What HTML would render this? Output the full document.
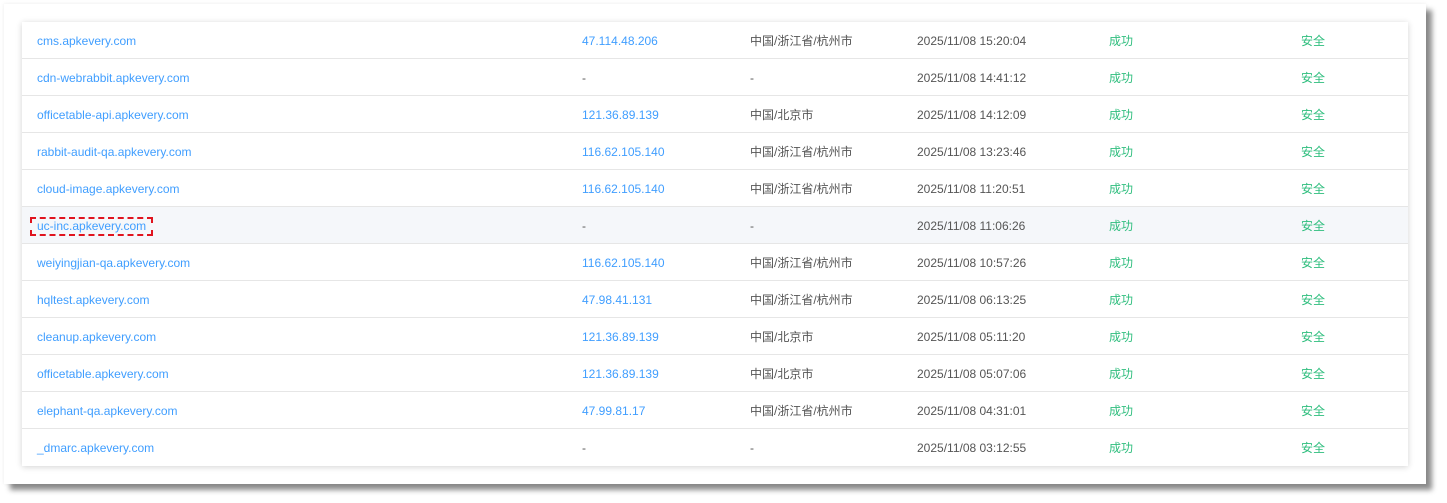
<!DOCTYPE html>
<html><head><meta charset="utf-8"><style>
body{margin:0;width:1447px;height:503px;background:#fff;position:relative;overflow:hidden;font-family:"Liberation Sans","Noto Sans CJK SC",sans-serif;font-size:12px}
.outer{position:absolute;left:4px;top:4px;width:1422px;height:480px;background:#fff;box-shadow:6px 6px 5px rgba(0,0,0,.45),0 0 4px rgba(0,0,0,.08)}
.tbl{position:absolute;left:22px;top:22px;width:1386px;height:444px;background:#fff;box-shadow:0 1px 6px rgba(0,0,0,.18)}
.r{position:relative;height:36px;border-bottom:1px solid #e6e6e6;line-height:36px}
.r:last-child{border-bottom:none}
.r.h{background:#f5f7fa}
.r span{position:absolute;top:1px;white-space:nowrap}
.a{left:15px;color:#409eff}.b{left:560px}.c{left:728px;color:#555}.d{left:895px;color:#555}.e{left:1087px;color:#2fbe7e}.f{left:1279px;color:#2fbe7e}
.ip{color:#409eff}.dash{color:#555}
.box{position:absolute;left:8px;top:10px;width:119px;height:15px;border:2px dashed #e0141e}
</style></head><body>
<div class="outer"></div>
<div class="tbl">
<div class="r"><span class="a">cms.apkevery.com</span><span class="b ip">47.114.48.206</span><span class="c">中国/浙江省/杭州市</span><span class="d">2025/11/08 15:20:04</span><span class="e">成功</span><span class="f">安全</span></div>
<div class="r"><span class="a">cdn-webrabbit.apkevery.com</span><span class="b dash">-</span><span class="c">-</span><span class="d">2025/11/08 14:41:12</span><span class="e">成功</span><span class="f">安全</span></div>
<div class="r"><span class="a">officetable-api.apkevery.com</span><span class="b ip">121.36.89.139</span><span class="c">中国/北京市</span><span class="d">2025/11/08 14:12:09</span><span class="e">成功</span><span class="f">安全</span></div>
<div class="r"><span class="a">rabbit-audit-qa.apkevery.com</span><span class="b ip">116.62.105.140</span><span class="c">中国/浙江省/杭州市</span><span class="d">2025/11/08 13:23:46</span><span class="e">成功</span><span class="f">安全</span></div>
<div class="r"><span class="a">cloud-image.apkevery.com</span><span class="b ip">116.62.105.140</span><span class="c">中国/浙江省/杭州市</span><span class="d">2025/11/08 11:20:51</span><span class="e">成功</span><span class="f">安全</span></div>
<div class="r h"><div class="box"></div><span class="a">uc-inc.apkevery.com</span><span class="b dash">-</span><span class="c">-</span><span class="d">2025/11/08 11:06:26</span><span class="e">成功</span><span class="f">安全</span></div>
<div class="r"><span class="a">weiyingjian-qa.apkevery.com</span><span class="b ip">116.62.105.140</span><span class="c">中国/浙江省/杭州市</span><span class="d">2025/11/08 10:57:26</span><span class="e">成功</span><span class="f">安全</span></div>
<div class="r"><span class="a">hqltest.apkevery.com</span><span class="b ip">47.98.41.131</span><span class="c">中国/浙江省/杭州市</span><span class="d">2025/11/08 06:13:25</span><span class="e">成功</span><span class="f">安全</span></div>
<div class="r"><span class="a">cleanup.apkevery.com</span><span class="b ip">121.36.89.139</span><span class="c">中国/北京市</span><span class="d">2025/11/08 05:11:20</span><span class="e">成功</span><span class="f">安全</span></div>
<div class="r"><span class="a">officetable.apkevery.com</span><span class="b ip">121.36.89.139</span><span class="c">中国/北京市</span><span class="d">2025/11/08 05:07:06</span><span class="e">成功</span><span class="f">安全</span></div>
<div class="r"><span class="a">elephant-qa.apkevery.com</span><span class="b ip">47.99.81.17</span><span class="c">中国/浙江省/杭州市</span><span class="d">2025/11/08 04:31:01</span><span class="e">成功</span><span class="f">安全</span></div>
<div class="r"><span class="a">_dmarc.apkevery.com</span><span class="b dash">-</span><span class="c">-</span><span class="d">2025/11/08 03:12:55</span><span class="e">成功</span><span class="f">安全</span></div>
</div>
</body></html>
